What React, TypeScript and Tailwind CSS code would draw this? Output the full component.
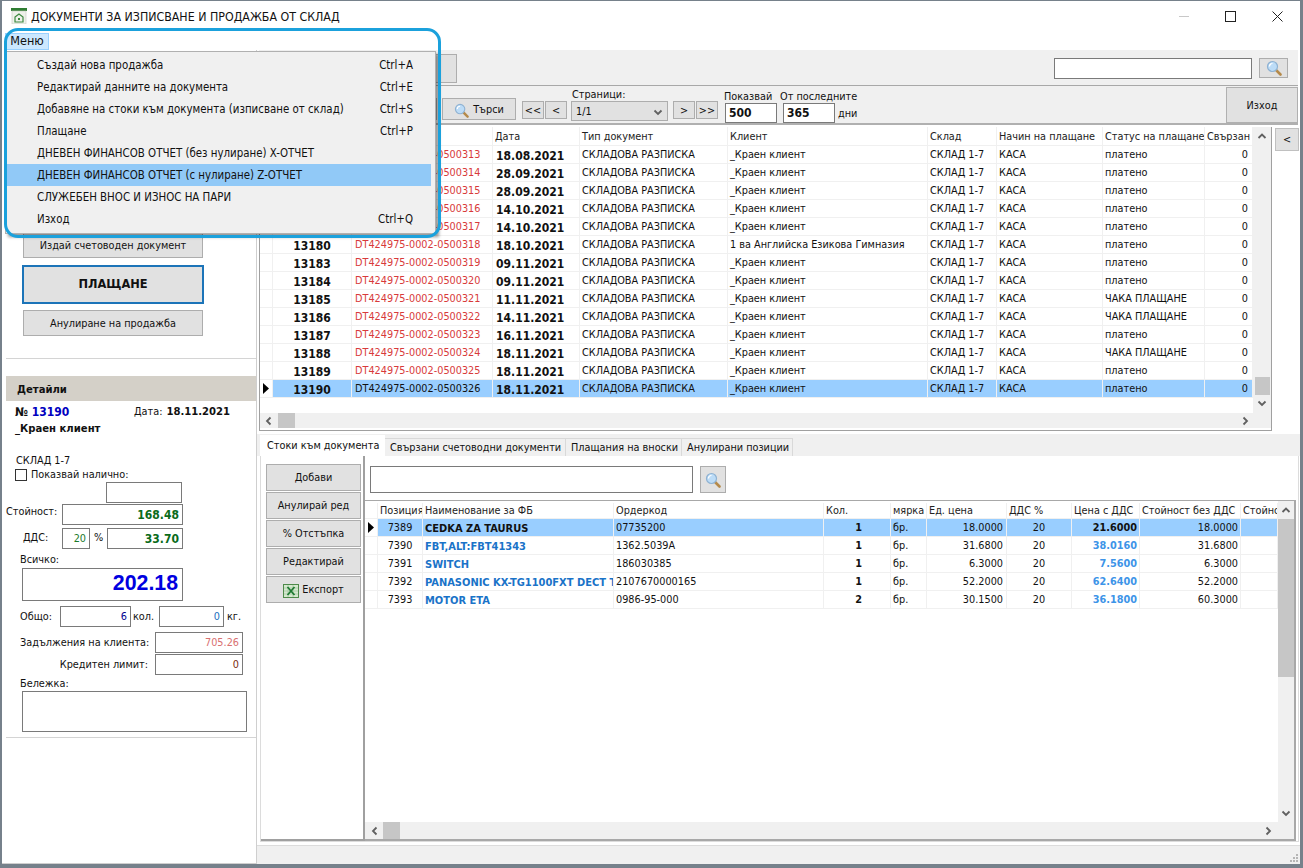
import React from "react";
import { twMerge } from "tailwind-merge";

const topCols = "grid grid-cols-[13px_79px_141px_87px_148px_200px_69px_106px_102px_48px]";
const lowCols = "grid grid-cols-[13px_45px_191px_210px_67px_36px_80px_65px_68px_101px_37px]";

type TopRow = [string, string, string, string, string];
const topRows: TopRow[] = [
  ["13175", "0500313", "18.08.2021", "_Краен клиент", "платено"],
  ["13176", "0500314", "28.09.2021", "_Краен клиент", "платено"],
  ["13177", "0500315", "28.09.2021", "_Краен клиент", "платено"],
  ["13178", "0500316", "14.10.2021", "_Краен клиент", "платено"],
  ["13179", "0500317", "14.10.2021", "_Краен клиент", "платено"],
  ["13180", "0500318", "18.10.2021", "1 ва Английска Езикова Гимназия", "платено"],
  ["13183", "0500319", "09.11.2021", "_Краен клиент", "платено"],
  ["13184", "0500320", "09.11.2021", "_Краен клиент", "платено"],
  ["13185", "0500321", "11.11.2021", "_Краен клиент", "ЧАКА ПЛАЩАНЕ"],
  ["13186", "0500322", "14.11.2021", "_Краен клиент", "ЧАКА ПЛАЩАНЕ"],
  ["13187", "0500323", "16.11.2021", "_Краен клиент", "платено"],
  ["13188", "0500324", "18.11.2021", "_Краен клиент", "ЧАКА ПЛАЩАНЕ"],
  ["13189", "0500325", "18.11.2021", "_Краен клиент", "платено"],
  ["13190", "0500326", "18.11.2021", "_Краен клиент", "платено"],
];

const lowRows = [
  ["7389", "CEDKA ZA TAURUS", "07735200", "1", "18.0000", "21.6000", "18.0000"],
  ["7390", "FBT,ALT:FBT41343", "1362.5039A", "1", "31.6800", "38.0160", "31.6800"],
  ["7391", "SWITCH", "186030385", "1", "6.3000", "7.5600", "6.3000"],
  ["7392", "PANASONIC KX-TG1100FXT DECT TELEPHONE", "2107670000165", "1", "52.2000", "62.6400", "52.2000"],
  ["7393", "MOTOR ETA", "0986-95-000", "2", "30.1500", "36.1800", "60.3000"],
];

const menuItems: [string, string][] = [
  ["Създай нова продажба", "Ctrl+A"],
  ["Редактирай данните на документа", "Ctrl+E"],
  ["Добавяне на стоки към документа (изписване от склад)", "Ctrl+S"],
  ["Плащане", "Ctrl+P"],
  ["ДНЕВЕН ФИНАНСОВ ОТЧЕТ (без нулиране) X-ОТЧЕТ", ""],
  ["ДНЕВЕН ФИНАНСОВ ОТЧЕТ (с нулиране) Z-ОТЧЕТ", ""],
  ["СЛУЖЕБЕН ВНОС И ИЗНОС НА ПАРИ", ""],
  ["Изход", "Ctrl+Q"],
];

function Magnifier({ size = 16 }: { size?: number }) {
  return (
    <svg width={size} height={size} viewBox="0 0 16 16">
      <line x1="9.5" y1="9.5" x2="14.5" y2="14.5" stroke="#b58a4a" strokeWidth="2.6" strokeLinecap="round" />
      <circle cx="6.5" cy="6.5" r="5" fill="#bcdcf7" stroke="#8fb2d2" strokeWidth="1.2" />
      <path d="M3.5 6.5a3 3 0 0 1 3-3" fill="none" stroke="#ffffff" strokeWidth="1.2" />
    </svg>
  );
}

function Chevron({ dir }: { dir: "up" | "down" | "left" | "right" }) {
  const d = {
    up: "M1.5 6L5 2.5L8.5 6",
    down: "M1.5 3.5L5 7L8.5 3.5",
    left: "M6.5 1.5L3 5L6.5 8.5",
    right: "M3.5 1.5L7 5L3.5 8.5",
  }[dir];
  return (
    <svg width="10" height="10" viewBox="0 0 10 10">
      <path d={d} fill="none" stroke="#606060" strokeWidth="1.8" />
    </svg>
  );
}

function Marker() {
  return (
    <svg width="8" height="11" viewBox="0 0 8 11">
      <polygon points="1,0 7,5.5 1,11" fill="#000000" />
    </svg>
  );
}

function Logo() {
  return (
    <svg width="16" height="16" viewBox="0 0 16 16">
      <rect x="0" y="0" width="16" height="3" fill="#2f7d32" />
      <rect x="1" y="3" width="14" height="13" fill="#eef1ea" stroke="#c3c8be" strokeWidth="0.6" />
      <path d="M4 9l4-3 4 3v5H4z" fill="none" stroke="#3d8a40" strokeWidth="1.2" />
      <rect x="7" y="10" width="2" height="2" fill="#3d8a40" />
    </svg>
  );
}

function ExcelIcon() {
  return (
    <svg width="16" height="16" viewBox="0 0 16 16">
      <rect x="0.5" y="1.5" width="15" height="13" fill="#d5e8cf" stroke="#4e8a4a" />
      <path d="M1 5h14M1 8h14M1 11h14M5 2v12M10 2v12" stroke="#9fc39a" strokeWidth="0.7" />
      <path d="M4.5 4l7 8M11.5 4l-7 8" stroke="#1f7a33" strokeWidth="1.8" />
    </svg>
  );
}

function GrayBtn({ className = "", children }: { className?: string; children?: React.ReactNode }) {
  return (
    <div className={twMerge("flex shrink-0 items-center justify-center border border-[#adadad] bg-[#e1e1e1] pt-[2px] text-[#111]", className)}>
      {children}
    </div>
  );
}

function Field({ className = "", children }: { className?: string; children?: React.ReactNode }) {
  return (
    <div className={twMerge("flex shrink-0 items-center justify-end border border-[#7a7a7a] bg-white pr-[3px]", className)}>
      {children}
    </div>
  );
}

function Head({ children }: { children?: React.ReactNode }) {
  return (
    <div className="flex items-center overflow-hidden whitespace-nowrap border-r border-[#f0f0f0] pl-[2px] pt-[2px] text-[#222]">
      {children}
    </div>
  );
}

function Cell({ className = "", children }: { className?: string; children?: React.ReactNode }) {
  return (
    <div className={twMerge("flex h-[18px] items-center overflow-hidden whitespace-nowrap border-b border-r border-[#f0f0f0] px-[2px] pt-[2px]", className)}>
      {children}
    </div>
  );
}

export default function App() {
  return (
    <div className="relative h-[868px] w-[1303px] overflow-hidden bg-[#76818b] text-[10.8px] leading-none text-[#111] font-['DejaVu_Sans_Condensed','DejaVu_Sans',sans-serif] [font-stretch:condensed]">
      <div className="ml-[2px] mt-[1px] flex h-[863px] w-[1298px] flex-col bg-white">
        {/* title bar */}
        <div className="flex h-[30px] shrink-0 items-center pl-[9px]">
          <Logo />
          <span className="ml-[4px] pt-[2px] text-[12.3px] text-[#111]">ДОКУМЕНТИ ЗА ИЗПИСВАНЕ И ПРОДАЖБА ОТ СКЛАД</span>
          <div className="ml-auto flex items-center pr-[17px]">
            <span className="mr-[36px] h-px w-[10px] bg-[#c8c8c8]" />
            <span className="mr-[36px] h-[11px] w-[11px] border border-[#222]" />
            <svg width="11" height="11" viewBox="0 0 11 11">
              <path d="M0.5 0.5L10.5 10.5M10.5 0.5L0.5 10.5" stroke="#222" strokeWidth="1" />
            </svg>
          </div>
        </div>
        {/* menu bar */}
        <div className="flex h-[19px] shrink-0 items-end pl-[3px]">
          <div className="flex h-[17px] w-[44px] items-center justify-center border border-[#99d1ff] bg-[#cce8ff] text-[12.5px]">Меню</div>
        </div>

        <div className="flex min-h-0 flex-1">
          {/* left panel */}
          <div className="flex w-[255px] shrink-0 flex-col border-b border-r border-[#cfcfcf] pl-[4px]">
            <div className="flex h-[309px] shrink-0 flex-col items-start border-b border-[#d4d4d4] pl-[16px]">
              <div className="mt-[156px] h-[26px]" />
              <GrayBtn className="ml-[1px] h-[26px] w-[180px]">Издай счетоводен документ</GrayBtn>
              <GrayBtn className="mt-[7px] h-[39px] w-[182px] border-2 border-[#1c74b8] pt-0 text-[12.7px] font-bold">ПЛАЩАНЕ</GrayBtn>
              <GrayBtn className="ml-[1px] mt-[6px] h-[26px] w-[180px]">Анулиране на продажба</GrayBtn>
            </div>
            <div className="mt-[17px] flex h-[25px] shrink-0 items-center bg-[#d4d0c8] pl-[11px] pt-[2px] text-[11.2px] font-bold">Детайли</div>

            <div className="mt-[3px] flex h-[16px] items-center pl-[9px] text-[12px] font-bold">
              <span className="w-[119px]">
                № <span className="text-[#0000c0]">13190</span>
              </span>
              <span className="text-[10.8px] font-normal">Дата:</span>
              <span className="ml-[4px] text-[11.2px]">18.11.2021</span>
            </div>
            <div className="mt-[1px] flex h-[16px] items-center pl-[9px] text-[11.2px] font-bold">_Краен клиент</div>
            <div className="mt-[16px] flex h-[14px] items-center pl-[10px] pt-[2px]">СКЛАД 1-7</div>
            <div className="flex h-[15px] items-center pl-[9px]">
              <span className="mr-[4px] h-[12px] w-[12px] border border-[#333] bg-white" />
              <span className="pt-[2px]">Показвай налично:</span>
            </div>
            <div className="flex pl-[100px]">
              <Field className="h-[21px] w-[76px]" />
            </div>
            <div className="mt-[1px] flex">
              <span className="w-[56px] pt-[3px]">Стойност:</span>
              <Field className="h-[21px] w-[121px] text-[12px] font-bold text-[#0a6b1a]">168.48</Field>
            </div>
            <div className="mt-[3px] flex items-center">
              <span className="w-[56px] pl-[17px]">ДДС:</span>
              <Field className="h-[21px] w-[28px] pt-[2px] text-[#1a7a2a]">20</Field>
              <span className="w-[17px] text-center">%</span>
              <Field className="h-[21px] w-[76px] text-[12px] font-bold text-[#0a6b1a]">33.70</Field>
            </div>
            <div className="mt-[3px] flex h-[14px] items-center pl-[14px] pt-[2px]">Всичко:</div>
            <div className="mt-[2px] flex pl-[16px]">
              <Field className="h-[33px] w-[161px] pb-[2px] pr-[4px] text-[21.3px] font-bold text-[#0000e0] font-['Liberation_Sans',sans-serif]">202.18</Field>
            </div>
            <div className="mt-[5px] flex items-center pl-[14px]">
              <span className="w-[40px] pt-[2px]">Общо:</span>
              <Field className="h-[21px] w-[71px] pt-[2px] text-[#000090]">6</Field>
              <span className="w-[28px] pl-[2px] pt-[2px]">кол.</span>
              <Field className="h-[21px] w-[65px] pt-[2px] text-[#1a6fc0]">0</Field>
              <span className="pl-[3px] pt-[2px]">кг.</span>
            </div>
            <div className="mt-[5px] flex items-center pl-[14px]">
              <span className="w-[135px] pt-[2px]">Задължения на клиента:</span>
              <Field className="h-[21px] w-[88px] pt-[2px] text-[#d97070]">705.26</Field>
            </div>
            <div className="mt-[1px] flex items-center pl-[14px]">
              <span className="w-[135px] pr-[7px] pt-[2px] text-right">Кредитен лимит:</span>
              <Field className="h-[21px] w-[88px] pt-[2px] text-[#7a2a10]">0</Field>
            </div>
            <div className="flex h-[16px] items-center pl-[14px] pt-[2px]">Бележка:</div>
            <div className="flex pl-[16px]">
              <Field className="h-[41px] w-[225px]" />
            </div>
            <div className="mt-[5px] border-b border-[#d4d4d4]" />
          </div>

          {/* right side */}
          <div className="flex min-w-0 flex-1 flex-col">
            <div className="ml-[2px] mr-[2px] flex h-[36px] shrink-0 items-start border-b border-[#a8a8a8] bg-[#f0f0f0]">
              <GrayBtn className="ml-[40px] mt-[4px] h-[29px] w-[158px]" />
              <Field className="ml-auto mt-[8px] h-[21px] w-[198px]" />
              <GrayBtn className="ml-[7px] mr-[10px] mt-[8px] h-[20px] w-[29px] pt-0">
                <Magnifier />
              </GrayBtn>
            </div>
            <div className="ml-[2px] mr-[2px] flex h-[39px] shrink-0 items-start border-b-2 border-[#b0b0b0] bg-[#f0f0f0]">
              <GrayBtn className="ml-[60px] mt-[12px] h-[22px] w-[118px]" />
              <GrayBtn className="ml-[5px] mt-[12px] h-[22px] w-[74px] gap-[4px]">
                <Magnifier size={15} />
                Търси
              </GrayBtn>
              <GrayBtn className="ml-[6px] mt-[15px] h-[18px] w-[22px]">&lt;&lt;</GrayBtn>
              <GrayBtn className="ml-px mt-[15px] h-[18px] w-[22px]">&lt;</GrayBtn>
              <div className="ml-[4px] flex w-[97px] flex-col">
                <span className="mt-px flex h-[14px] items-end pl-px">Страници:</span>
                <div className="flex h-[20px] items-center justify-between border border-[#adadad] bg-[#e1e1e1] pl-[4px] pr-[4px] pt-[2px]">
                  1/1
                  <Chevron dir="down" />
                </div>
              </div>
              <GrayBtn className="ml-[5px] mt-[15px] h-[18px] w-[22px]">&gt;</GrayBtn>
              <GrayBtn className="ml-px mt-[15px] h-[18px] w-[22px]">&gt;&gt;</GrayBtn>
              <div className="ml-[7px] flex w-[52px] flex-col">
                <span className="-ml-px flex h-[17px] items-end whitespace-nowrap">Показвай</span>
                <div className="flex h-[20px] items-center border border-[#7a7a7a] bg-white pl-[3px] text-[12px] font-bold">500</div>
              </div>
              <div className="ml-[4px] flex w-[80px] flex-col">
                <span className="-ml-px flex h-[17px] items-end whitespace-nowrap">От последните</span>
                <div className="flex items-center">
                  <div className="ml-[2px] flex h-[20px] w-[52px] items-center border border-[#7a7a7a] bg-white pl-[3px] text-[12px] font-bold">365</div>
                  <span className="ml-[3px] mt-[3px]">дни</span>
                </div>
              </div>
              <GrayBtn className="ml-auto mt-px h-[36px] w-[72px] border-[#b0b0b0]">Изход</GrayBtn>
            </div>

            {/* upper grid */}
            <div className="mt-[2px] flex h-[304px] shrink-0 pl-[2px]">
              <div className="flex w-[1013px] shrink-0 flex-col border-b border-l border-r border-[#a0a0a0]">
                <div className="flex min-h-0 flex-1">
                  <div className="w-[993px] shrink-0">
                    <div className={`${topCols} h-[19px] border-b border-[#f0f0f0]`}>
                      <Head />
                      <Head />
                      <Head>Номер</Head>
                      <Head>Дата</Head>
                      <Head>Тип документ</Head>
                      <Head>Клиент</Head>
                      <Head>Склад</Head>
                      <Head>Начин на плащане</Head>
                      <Head>Статус на плащане</Head>
                      <Head>Свързан</Head>
                    </div>
                    {topRows.map((r, i) => {
                      const sel = i === topRows.length - 1;
                      const bg = sel ? "bg-[#99ceff]" : "";
                      return (
                        <div key={r[0]} className={topCols}>
                          <Cell className="justify-center pt-0">{sel && <Marker />}</Cell>
                          <Cell className={`${bg} justify-center text-[12px] font-bold`}>{r[0]}</Cell>
                          <Cell className={`${bg} pl-[3px] ${sel ? "" : "text-[#d83a3a]"}`}>DT424975-0002-{r[1]}</Cell>
                          <Cell className={`${bg} pl-[3px] text-[12px] font-bold`}>{r[2]}</Cell>
                          <Cell className={bg}>СКЛАДОВА РАЗПИСКА</Cell>
                          <Cell className={bg}>{r[3]}</Cell>
                          <Cell className={bg}>СКЛАД 1-7</Cell>
                          <Cell className={bg}>КАСА</Cell>
                          <Cell className={bg}>{r[4]}</Cell>
                          <Cell className={`${bg} justify-end pr-[4px]`}>0</Cell>
                        </div>
                      );
                    })}
                  </div>
                  <div className="flex flex-1 flex-col items-center bg-[#f0f0f0] pt-[5px]">
                    <Chevron dir="up" />
                    <div className="mt-auto h-[18px] w-[15px] bg-[#c6c6c6]" />
                    <div className="mb-[5px] mt-[3px]">
                      <Chevron dir="down" />
                    </div>
                  </div>
                </div>
                <div className="mb-[2px] flex h-[15px] shrink-0 items-center bg-[#f0f0f0] pl-[4px] pr-[21px]">
                  <Chevron dir="left" />
                  <div className="ml-[4px] h-full w-[17px] bg-[#c6c6c6]" />
                  <div className="ml-auto">
                    <Chevron dir="right" />
                  </div>
                </div>
              </div>
              <GrayBtn className="ml-[3px] mt-px h-[23px] w-[24px] border-[#c0c0c0]">&lt;</GrayBtn>
            </div>

            {/* tabs */}
            <div className="mt-[3px] flex h-[22px] shrink-0 items-end bg-[#f0f0f0] pl-[3px]">
              <div className="flex h-[21px] w-[125px] items-center whitespace-nowrap bg-white pl-[7px] pt-px">Стоки към документа</div>
              <div className="flex h-[18px] w-[181px] items-center whitespace-nowrap border-r border-t border-[#d9d9d9] pl-[5px] pt-[2px]">Свързани счетоводни документи</div>
              <div className="flex h-[18px] w-[116px] items-center whitespace-nowrap border-r border-t border-[#d9d9d9] pl-[5px] pt-[2px]">Плащания на вноски</div>
              <div className="flex h-[18px] w-[111px] items-center whitespace-nowrap border-r border-t border-[#d9d9d9] pl-[5px] pt-[2px]">Анулирани позиции</div>
            </div>
            <div className="ml-[3px] mr-[1px] flex h-[386px] shrink-0 border-b border-l border-r border-[#dcdcdc] bg-white">
              <div className="flex w-[104px] shrink-0 flex-col gap-px border-b-2 border-r-2 border-[#a0a0a0] pl-[5px] pt-[8px]">
                <GrayBtn className="h-[27px] w-[95px]">Добави</GrayBtn>
                <GrayBtn className="h-[27px] w-[95px]">Анулирай ред</GrayBtn>
                <GrayBtn className="h-[27px] w-[95px]">% Отстъпка</GrayBtn>
                <GrayBtn className="h-[27px] w-[95px]">Редактирай</GrayBtn>
                <GrayBtn className="h-[27px] w-[95px] gap-[3px]">
                  <ExcelIcon />
                  Експорт
                </GrayBtn>
              </div>
              <div className="flex min-w-0 flex-1 flex-col">
                <div className="flex h-[44px] shrink-0 items-start pl-[5px] pt-[10px]">
                  <Field className="h-[27px] w-[323px]" />
                  <GrayBtn className="ml-[7px] h-[27px] w-[26px] pt-0">
                    <Magnifier />
                  </GrayBtn>
                </div>
                <div className="flex w-[931px] flex-1 flex-col border-b-2 border-r-2 border-t border-[#a8a8a8]">
                  <div className="flex min-h-0 flex-1">
                    <div className="w-[913px] shrink-0 overflow-hidden">
                      <div className={`${lowCols} h-[18px] border-b border-[#f0f0f0] pt-[2px]`}>
                        <Head />
                        <Head>Позиция</Head>
                        <Head>Наименование за ФБ</Head>
                        <Head>Ордеркод</Head>
                        <Head>Кол.</Head>
                        <Head>мярка</Head>
                        <Head>Ед. цена</Head>
                        <Head>ДДС %</Head>
                        <Head>Цена с ДДС</Head>
                        <Head>Стойност без ДДС</Head>
                        <Head>Стойност</Head>
                      </div>
                      {lowRows.map((r, i) => {
                        const sel = i === 0;
                        const bg = sel ? "bg-[#99ceff]" : "";
                        return (
                          <div key={r[0]} className={lowCols}>
                            <Cell className="justify-center pt-0">{sel && <Marker />}</Cell>
                            <Cell className={`${bg} justify-center`}>{r[0]}</Cell>
                            <Cell className={`${bg} text-[11px] font-bold ${sel ? "" : "text-[#1a73c8]"}`}>{r[1]}</Cell>
                            <Cell className={bg}>{r[2]}</Cell>
                            <Cell className={`${bg} justify-end pr-[28px] font-bold`}>{r[3]}</Cell>
                            <Cell className={bg}>бр.</Cell>
                            <Cell className={`${bg} justify-end pr-[3px]`}>{r[4]}</Cell>
                            <Cell className={`${bg} justify-center`}>20</Cell>
                            <Cell className={`${bg} justify-end font-bold ${sel ? "" : "text-[#3d94e8]"}`}>{r[5]}</Cell>
                            <Cell className={`${bg} justify-end`}>{r[6]}</Cell>
                            <Cell className={bg} />
                          </div>
                        );
                      })}
                    </div>
                    <div className="flex flex-1 flex-col items-center bg-[#f0f0f0] pt-[5px]">
                      <Chevron dir="up" />
                      <div className="mt-[3px] h-[158px] w-[16px] bg-[#c6c6c6]" />
                      <div className="mb-[4px] mt-auto">
                        <Chevron dir="down" />
                      </div>
                    </div>
                  </div>
                  <div className="flex h-[17px] shrink-0 items-center bg-[#f0f0f0] pl-[5px] pr-[21px]">
                    <Chevron dir="left" />
                    <div className="ml-[3px] h-full w-[17px] bg-[#c6c6c6]" />
                    <div className="ml-auto">
                      <Chevron dir="right" />
                    </div>
                  </div>
                </div>
              </div>
            </div>

            {/* status */}
            <div className="mt-[3px] flex flex-1 items-end justify-end border-t border-[#dcdcdc] bg-[#f0f0f0] pr-px">
              <svg width="9" height="9" viewBox="0 0 9 9" className="mb-px">
                <path d="M6 0h2v2H6zM3 3h2v2H3zM6 3h2v2H6zM0 6h2v2H0zM3 6h2v2H3zM6 6h2v2H6z" fill="#b5b5b5" />
              </svg>
            </div>
          </div>
        </div>
      </div>

      {/* open menu */}
      <div className="absolute left-[5px] top-[51px] w-[431px] border border-[#b0b0b0] bg-[#f0f0f0] py-[2px] pb-[3px] shadow-[3px_3px_3px_rgba(0,0,0,0.4)]">
        {menuItems.map(([t, s], i) => (
          <div key={t} className={`flex h-[22px] items-center pl-[31px] pr-[22px] pt-[2px] text-[11.4px] ${i === 5 ? "mr-[4px] bg-[#91c9f7]" : ""}`}>
            {t}
            <span className="ml-auto">{s}</span>
          </div>
        ))}
      </div>
      {/* highlight annotation */}
      <div className="pointer-events-none absolute left-[4px] top-[28px] h-[210px] w-[437px] rounded-[14px] border-[3px] border-[#1ba1dc]" />
    </div>
  );
}
